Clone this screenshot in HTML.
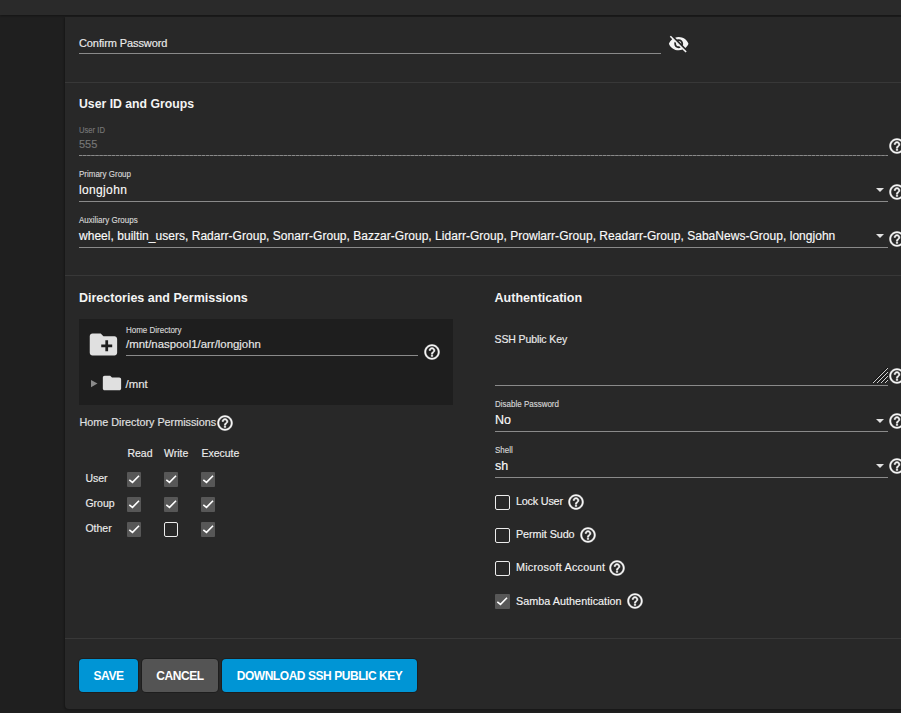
<!DOCTYPE html>
<html><head><meta charset="utf-8">
<style>
*{box-sizing:border-box;margin:0;padding:0}
html,body{width:901px;height:713px;overflow:hidden;background:#1f1f1f;font-family:"Liberation Sans",sans-serif;color:#ececec}
.abs{position:absolute}
.top{left:0;top:0;width:901px;height:15px;background:#2a2a2a;box-shadow:0 1px 2px rgba(0,0,0,.35)}
.panel{left:65px;top:17px;width:850px;height:692px;background:#282828;border-radius:0 0 0 4px;box-shadow:-1px 1px 2px rgba(0,0,0,.3)}
.t{position:absolute;white-space:pre;line-height:1;-webkit-text-stroke:0.15px currentColor}
.val{color:#fafafa}
.h{font-weight:bold;color:#f4f4f4;-webkit-text-stroke:0}
.cb{position:absolute;width:14px;height:14px;border-radius:2px}
.cb.on{background:#575757;border-radius:1px}
.cb.off{border:1.6px solid #ececec}
.btn{position:absolute;top:659px;height:33px;border-radius:4px;color:#fff;font-weight:bold;font-size:12px;letter-spacing:-0.45px;text-align:center;line-height:35px;box-shadow:0 0 0 1px rgba(0,0,0,.25)}
svg{position:absolute;overflow:visible}
</style></head><body>
<div class="abs top"></div>
<div class="abs panel"></div>
<div class="t " style="left:79px;top:37.69px;font-size:11px;letter-spacing:-0.1px;color:#ececec">Confirm Password</div>
<div class="abs" style="left:79px;top:53px;width:582px;height:1px;background:#8a8a8a"></div>
<svg style="left:667.91px;top:33.06px" width="21.38" height="21.38" viewBox="0 0 24 24"><path fill="#f5f5f5" d="M12 7c2.76 0 5 2.24 5 5 0 .65-.13 1.26-.36 1.83l2.92 2.92c1.51-1.26 2.7-2.89 3.43-4.75-1.73-4.39-6-7.5-11-7.5-1.4 0-2.74.25-3.98.7l2.16 2.16C10.740 7.13 11.35 7 12 7zM2 4.27l2.28 2.28.46.46C3.08 8.3 1.780 10.02 1 12c1.73 4.39 6 7.5 11 7.5 1.55 0 3.03-.3 4.38-.84l.42.42L19.73 22 21 20.73 3.27 3 2 4.27zM7.53 9.8l1.55 1.55c-.05.21-.08.43-.08.65 0 1.66 1.34 3 3 3 .22 0 .44-.03.65-.08l1.55 1.55c-.67.33-1.41.53-2.2.53-2.76 0-5-2.24-5-5 0-.79.2-1.53.53-2.2zm4.31-.78l3.15 3.15.02-.16c0-1.66-1.34-3-3-3l-.17.01z"/></svg>
<div class="abs" style="left:65px;top:82px;width:836px;height:1px;background:#383838"></div>
<div class="t h" style="left:79px;top:97.63px;font-size:12.25px;">User ID and Groups</div>
<div class="t " style="left:79px;top:125.94px;font-size:8.7px;color:#767676;transform:scaleX(0.88);transform-origin:0 0">User ID</div>
<div class="t " style="left:79px;top:138.69px;font-size:11px;color:#767676">555</div>
<div class="abs" style="left:79px;top:155px;width:809px;height:1px;background-image:linear-gradient(to right,#8a8a8a 0,#8a8a8a 3.2px,#505050 3.2px);background-size:4.1px 1px"></div>
<svg style="left:887.70px;top:137.00px" width="18.00" height="18.00" viewBox="0 0 24 24"><path fill="#f5f5f5" stroke="#f5f5f5" stroke-width="0.6" d="M11 18h2v-2h-2v2zm1-16C6.48 2 2 6.48 2 12s4.48 10 10 10 10-4.48 10-10S17.52 2 12 2zm0 18c-4.41 0-8-3.59-8-8s3.59-8 8-8 8 3.59 8 8-3.59 8-8 8zm0-14c-2.21 0-4 1.79-4 4h2c0-1.1.9-2 2-2s2 .9 2 2c0 2-3 1.75-3 5h2c0-2.25 3-2.5 3-5 0-2.21-1.79-4-4-4z"/></svg>
<div class="t " style="left:79px;top:169.64px;font-size:8.7px;color:#d6d6d6;transform:scaleX(0.92);transform-origin:0 0">Primary Group</div>
<div class="t val" style="left:79px;top:183.84px;font-size:12px;letter-spacing:0.35px">longjohn</div>
<div class="abs" style="left:79px;top:201px;width:809px;height:1px;background:#8a8a8a"></div>
<svg style="left:876px;top:188px" width="8" height="4" viewBox="0 0 8 4"><path fill="#e1e1e1" d="M0 0H8L4.0 4Z"/></svg>
<svg style="left:887.70px;top:183.00px" width="18.00" height="18.00" viewBox="0 0 24 24"><path fill="#f5f5f5" stroke="#f5f5f5" stroke-width="0.6" d="M11 18h2v-2h-2v2zm1-16C6.48 2 2 6.48 2 12s4.48 10 10 10 10-4.48 10-10S17.52 2 12 2zm0 18c-4.41 0-8-3.59-8-8s3.59-8 8-8 8 3.59 8 8-3.59 8-8 8zm0-14c-2.21 0-4 1.79-4 4h2c0-1.1.9-2 2-2s2 .9 2 2c0 2-3 1.75-3 5h2c0-2.25 3-2.5 3-5 0-2.21-1.79-4-4-4z"/></svg>
<div class="t " style="left:79px;top:215.64px;font-size:8.7px;color:#d6d6d6;transform:scaleX(0.92);transform-origin:0 0">Auxiliary Groups</div>
<div class="t val" style="left:79px;top:229.84px;font-size:12px;letter-spacing:0.03px">wheel, builtin_users, Radarr-Group, Sonarr-Group, Bazzar-Group, Lidarr-Group, Prowlarr-Group, Readarr-Group, SabaNews-Group, longjohn</div>
<div class="abs" style="left:79px;top:247px;width:809px;height:1px;background:#8a8a8a"></div>
<svg style="left:876px;top:234px" width="8" height="4" viewBox="0 0 8 4"><path fill="#e1e1e1" d="M0 0H8L4.0 4Z"/></svg>
<svg style="left:887.70px;top:230.00px" width="18.00" height="18.00" viewBox="0 0 24 24"><path fill="#f5f5f5" stroke="#f5f5f5" stroke-width="0.6" d="M11 18h2v-2h-2v2zm1-16C6.48 2 2 6.48 2 12s4.48 10 10 10 10-4.48 10-10S17.52 2 12 2zm0 18c-4.41 0-8-3.59-8-8s3.59-8 8-8 8 3.59 8 8-3.59 8-8 8zm0-14c-2.21 0-4 1.79-4 4h2c0-1.1.9-2 2-2s2 .9 2 2c0 2-3 1.75-3 5h2c0-2.25 3-2.5 3-5 0-2.21-1.79-4-4-4z"/></svg>
<div class="abs" style="left:65px;top:275px;width:836px;height:1px;background:#383838"></div>
<div class="t h" style="left:79px;top:291.62px;font-size:12.5px;">Directories and Permissions</div>
<div class="abs" style="left:79px;top:319px;width:374px;height:86px;background:#1e1e1e"></div>
<svg style="left:86.76px;top:328.22px" width="32.88" height="32.88" viewBox="0 0 24 24"><path fill="#e0e0e0" d="M20 6h-8l-2-2H4c-1.11 0-1.99.89-1.99 2L2 18c0 1.11.89 2 2 2h16c1.11 0 2-.89 2-2V8c0-1.11-.89-2-2-2z"/><path fill="#1e1e1e" d="M19 14h-3v3h-2v-3h-3v-2h3V9h2v3h3v2z" transform="translate(-0.6 0)"/></svg>
<div class="t " style="left:126px;top:325.94px;font-size:8.7px;color:#d6d6d6;transform:scaleX(0.92);transform-origin:0 0">Home Directory</div>
<div class="t " style="left:126px;top:338.65px;font-size:11.4px;color:#e8e8e8">/mnt/naspool1/arr/longjohn</div>
<div class="abs" style="left:126px;top:355px;width:292px;height:1px;background:#8a8a8a"></div>
<svg style="left:422.60px;top:342.70px" width="18.00" height="18.00" viewBox="0 0 24 24"><path fill="#f5f5f5" stroke="#f5f5f5" stroke-width="0.6" d="M11 18h2v-2h-2v2zm1-16C6.48 2 2 6.48 2 12s4.48 10 10 10 10-4.48 10-10S17.52 2 12 2zm0 18c-4.41 0-8-3.59-8-8s3.59-8 8-8 8 3.59 8 8-3.59 8-8 8zm0-14c-2.21 0-4 1.79-4 4h2c0-1.1.9-2 2-2s2 .9 2 2c0 2-3 1.75-3 5h2c0-2.25 3-2.5 3-5 0-2.21-1.79-4-4-4z"/></svg>
<svg style="left:90.7px;top:380px" width="6.5" height="7.2" viewBox="0 0 6.5 7.2"><path fill="#8a8a8a" d="M0 0L6.5 3.6L0 7.2Z"/></svg>
<svg style="left:101.07px;top:372.04px" width="21.96" height="21.96" viewBox="0 0 24 24"><path fill="#e0e0e0" d="M10 4H4c-1.1 0-1.99.9-1.99 2L2 18c0 1.1.9 2 2 2h16c1.1 0 2-.9 2-2V8c0-1.1-.9-2-2-2h-8l-2-2z"/></svg>
<div class="t " style="left:125.5px;top:379.35px;font-size:11.4px;color:#e8e8e8">/mnt</div>
<div class="t " style="left:79.4px;top:416.86px;font-size:10.8px;color:#e1e1e1">Home Directory Permissions</div>
<svg style="left:215.80px;top:414.00px" width="18.00" height="18.00" viewBox="0 0 24 24"><path fill="#f5f5f5" stroke="#f5f5f5" stroke-width="0.6" d="M11 18h2v-2h-2v2zm1-16C6.48 2 2 6.48 2 12s4.48 10 10 10 10-4.48 10-10S17.52 2 12 2zm0 18c-4.41 0-8-3.59-8-8s3.59-8 8-8 8 3.59 8 8-3.59 8-8 8zm0-14c-2.21 0-4 1.79-4 4h2c0-1.1.9-2 2-2s2 .9 2 2c0 2-3 1.75-3 5h2c0-2.25 3-2.5 3-5 0-2.21-1.79-4-4-4z"/></svg>
<div class="t " style="left:127.4px;top:448.11px;font-size:10.5px;">Read</div>
<div class="t " style="left:164px;top:448.11px;font-size:10.5px;">Write</div>
<div class="t " style="left:201.4px;top:448.11px;font-size:10.5px;">Execute</div>
<div class="t " style="left:85.4px;top:473.11px;font-size:10.5px;">User</div>
<div class="t " style="left:85.4px;top:498.11px;font-size:10.5px;">Group</div>
<div class="t " style="left:85.4px;top:523.11px;font-size:10.5px;">Other</div>
<div class="cb on" style="left:127px;top:472px;width:14px;height:15px"><svg style="left:0;top:0" width="14" height="14" viewBox="0 0 14 14"><path d="M2.3 7.8 L5.5 10.4 L12 3.7" fill="none" stroke="#fff" stroke-width="1.6"/></svg></div>
<div class="cb on" style="left:164px;top:472px;width:14px;height:15px"><svg style="left:0;top:0" width="14" height="14" viewBox="0 0 14 14"><path d="M2.3 7.8 L5.5 10.4 L12 3.7" fill="none" stroke="#fff" stroke-width="1.6"/></svg></div>
<div class="cb on" style="left:201px;top:472px;width:14px;height:15px"><svg style="left:0;top:0" width="14" height="14" viewBox="0 0 14 14"><path d="M2.3 7.8 L5.5 10.4 L12 3.7" fill="none" stroke="#fff" stroke-width="1.6"/></svg></div>
<div class="cb on" style="left:127px;top:497px;width:14px;height:15px"><svg style="left:0;top:0" width="14" height="14" viewBox="0 0 14 14"><path d="M2.3 7.8 L5.5 10.4 L12 3.7" fill="none" stroke="#fff" stroke-width="1.6"/></svg></div>
<div class="cb on" style="left:164px;top:497px;width:14px;height:15px"><svg style="left:0;top:0" width="14" height="14" viewBox="0 0 14 14"><path d="M2.3 7.8 L5.5 10.4 L12 3.7" fill="none" stroke="#fff" stroke-width="1.6"/></svg></div>
<div class="cb on" style="left:201px;top:497px;width:14px;height:15px"><svg style="left:0;top:0" width="14" height="14" viewBox="0 0 14 14"><path d="M2.3 7.8 L5.5 10.4 L12 3.7" fill="none" stroke="#fff" stroke-width="1.6"/></svg></div>
<div class="cb on" style="left:127px;top:522px;width:14px;height:15px"><svg style="left:0;top:0" width="14" height="14" viewBox="0 0 14 14"><path d="M2.3 7.8 L5.5 10.4 L12 3.7" fill="none" stroke="#fff" stroke-width="1.6"/></svg></div>
<div class="cb off" style="left:164px;top:522px;width:14px;height:15px"></div>
<div class="cb on" style="left:201px;top:522px;width:14px;height:15px"><svg style="left:0;top:0" width="14" height="14" viewBox="0 0 14 14"><path d="M2.3 7.8 L5.5 10.4 L12 3.7" fill="none" stroke="#fff" stroke-width="1.6"/></svg></div>
<div class="t h" style="left:494.6px;top:292.22px;font-size:12.5px;">Authentication</div>
<div class="t " style="left:494.6px;top:334.01px;font-size:10.5px;color:#ececec;letter-spacing:-0.12px">SSH Public Key</div>
<div class="abs" style="left:495px;top:385px;width:393px;height:1px;background:#8a8a8a"></div>
<svg style="left:872px;top:367px" width="17" height="17" viewBox="0 0 17 17"><g fill="none" stroke-width="1"><path d="M15.3 0.3L0.3 15.3M15.3 4.3L4.3 15.3M15.3 8.3L8.3 15.3M15.3 12.3L12.3 15.3" stroke="#000" stroke-opacity=".6"/><path d="M16 1L1 16M16 5L5 16M16 9L9 16M16 13L13 16" stroke="#d0d0d0"/></g></svg>
<svg style="left:888.00px;top:367.00px" width="18.00" height="18.00" viewBox="0 0 24 24"><path fill="#f5f5f5" stroke="#f5f5f5" stroke-width="0.6" d="M11 18h2v-2h-2v2zm1-16C6.48 2 2 6.48 2 12s4.48 10 10 10 10-4.48 10-10S17.52 2 12 2zm0 18c-4.41 0-8-3.59-8-8s3.59-8 8-8 8 3.59 8 8-3.59 8-8 8zm0-14c-2.21 0-4 1.79-4 4h2c0-1.1.9-2 2-2s2 .9 2 2c0 2-3 1.75-3 5h2c0-2.25 3-2.5 3-5 0-2.21-1.79-4-4-4z"/></svg>
<div class="t " style="left:494.6px;top:399.84px;font-size:8.7px;color:#d6d6d6;transform:scaleX(0.92);transform-origin:0 0">Disable Password</div>
<div class="t val" style="left:495px;top:414.42px;font-size:12.5px;">No</div>
<div class="abs" style="left:495px;top:431px;width:393px;height:1px;background:#8a8a8a"></div>
<svg style="left:876px;top:418.5px" width="8" height="4" viewBox="0 0 8 4"><path fill="#e1e1e1" d="M0 0H8L4.0 4Z"/></svg>
<svg style="left:888.00px;top:411.80px" width="18.00" height="18.00" viewBox="0 0 24 24"><path fill="#f5f5f5" stroke="#f5f5f5" stroke-width="0.6" d="M11 18h2v-2h-2v2zm1-16C6.48 2 2 6.48 2 12s4.48 10 10 10 10-4.48 10-10S17.52 2 12 2zm0 18c-4.41 0-8-3.59-8-8s3.59-8 8-8 8 3.59 8 8-3.59 8-8 8zm0-14c-2.21 0-4 1.79-4 4h2c0-1.1.9-2 2-2s2 .9 2 2c0 2-3 1.75-3 5h2c0-2.25 3-2.5 3-5 0-2.21-1.79-4-4-4z"/></svg>
<div class="t " style="left:495px;top:445.64px;font-size:8.7px;color:#d6d6d6;transform:scaleX(0.92);transform-origin:0 0">Shell</div>
<div class="t val" style="left:495px;top:460.42px;font-size:12.5px;">sh</div>
<div class="abs" style="left:495px;top:477px;width:393px;height:1px;background:#8a8a8a"></div>
<svg style="left:876px;top:464px" width="8" height="4" viewBox="0 0 8 4"><path fill="#e1e1e1" d="M0 0H8L4.0 4Z"/></svg>
<svg style="left:888.00px;top:457.40px" width="18.00" height="18.00" viewBox="0 0 24 24"><path fill="#f5f5f5" stroke="#f5f5f5" stroke-width="0.6" d="M11 18h2v-2h-2v2zm1-16C6.48 2 2 6.48 2 12s4.48 10 10 10 10-4.48 10-10S17.52 2 12 2zm0 18c-4.41 0-8-3.59-8-8s3.59-8 8-8 8 3.59 8 8-3.59 8-8 8zm0-14c-2.21 0-4 1.79-4 4h2c0-1.1.9-2 2-2s2 .9 2 2c0 2-3 1.75-3 5h2c0-2.25 3-2.5 3-5 0-2.21-1.79-4-4-4z"/></svg>
<div class="cb off" style="left:494.6px;top:494.5px;width:15px;height:15px"></div>
<div class="t " style="left:516px;top:495.86px;font-size:10.8px;color:#f2f2f2;letter-spacing:-0.2px">Lock User</div>
<svg style="left:567.00px;top:493.00px" width="18.00" height="18.00" viewBox="0 0 24 24"><path fill="#f5f5f5" stroke="#f5f5f5" stroke-width="0.6" d="M11 18h2v-2h-2v2zm1-16C6.48 2 2 6.48 2 12s4.48 10 10 10 10-4.48 10-10S17.52 2 12 2zm0 18c-4.41 0-8-3.59-8-8s3.59-8 8-8 8 3.59 8 8-3.59 8-8 8zm0-14c-2.21 0-4 1.79-4 4h2c0-1.1.9-2 2-2s2 .9 2 2c0 2-3 1.75-3 5h2c0-2.25 3-2.5 3-5 0-2.21-1.79-4-4-4z"/></svg>
<div class="cb off" style="left:494.6px;top:527.5px;width:15px;height:15px"></div>
<div class="t " style="left:516px;top:528.86px;font-size:10.8px;color:#f2f2f2;letter-spacing:-0.08px">Permit Sudo</div>
<svg style="left:578.50px;top:526.00px" width="18.00" height="18.00" viewBox="0 0 24 24"><path fill="#f5f5f5" stroke="#f5f5f5" stroke-width="0.6" d="M11 18h2v-2h-2v2zm1-16C6.48 2 2 6.48 2 12s4.48 10 10 10 10-4.48 10-10S17.52 2 12 2zm0 18c-4.41 0-8-3.59-8-8s3.59-8 8-8 8 3.59 8 8-3.59 8-8 8zm0-14c-2.21 0-4 1.79-4 4h2c0-1.1.9-2 2-2s2 .9 2 2c0 2-3 1.75-3 5h2c0-2.25 3-2.5 3-5 0-2.21-1.79-4-4-4z"/></svg>
<div class="cb off" style="left:494.6px;top:560.5px;width:15px;height:15px"></div>
<div class="t " style="left:516px;top:561.86px;font-size:10.8px;color:#f2f2f2;letter-spacing:0.23px">Microsoft Account</div>
<svg style="left:608.00px;top:559.00px" width="18.00" height="18.00" viewBox="0 0 24 24"><path fill="#f5f5f5" stroke="#f5f5f5" stroke-width="0.6" d="M11 18h2v-2h-2v2zm1-16C6.48 2 2 6.48 2 12s4.48 10 10 10 10-4.48 10-10S17.52 2 12 2zm0 18c-4.41 0-8-3.59-8-8s3.59-8 8-8 8 3.59 8 8-3.59 8-8 8zm0-14c-2.21 0-4 1.79-4 4h2c0-1.1.9-2 2-2s2 .9 2 2c0 2-3 1.75-3 5h2c0-2.25 3-2.5 3-5 0-2.21-1.79-4-4-4z"/></svg>
<div class="cb on" style="left:494.6px;top:593.5px;width:15px;height:15px"><svg style="left:0;top:0" width="14" height="14" viewBox="0 0 14 14"><path d="M2.3 7.8 L5.5 10.4 L12 3.7" fill="none" stroke="#fff" stroke-width="1.6"/></svg></div>
<div class="t " style="left:516px;top:595.86px;font-size:10.8px;color:#f2f2f2;letter-spacing:0.03px">Samba Authentication</div>
<svg style="left:625.50px;top:592.00px" width="18.00" height="18.00" viewBox="0 0 24 24"><path fill="#f5f5f5" stroke="#f5f5f5" stroke-width="0.6" d="M11 18h2v-2h-2v2zm1-16C6.48 2 2 6.48 2 12s4.48 10 10 10 10-4.48 10-10S17.52 2 12 2zm0 18c-4.41 0-8-3.59-8-8s3.59-8 8-8 8 3.59 8 8-3.59 8-8 8zm0-14c-2.21 0-4 1.79-4 4h2c0-1.1.9-2 2-2s2 .9 2 2c0 2-3 1.75-3 5h2c0-2.25 3-2.5 3-5 0-2.21-1.79-4-4-4z"/></svg>
<div class="abs" style="left:65px;top:638px;width:836px;height:1px;background:#383838"></div>
<div class="btn" style="left:79px;width:59px;background:#0095d5">SAVE</div>
<div class="btn" style="left:142px;width:76px;background:#545454">CANCEL</div>
<div class="btn" style="left:222px;width:195px;background:#0095d5">DOWNLOAD SSH PUBLIC KEY</div>
</body></html>
